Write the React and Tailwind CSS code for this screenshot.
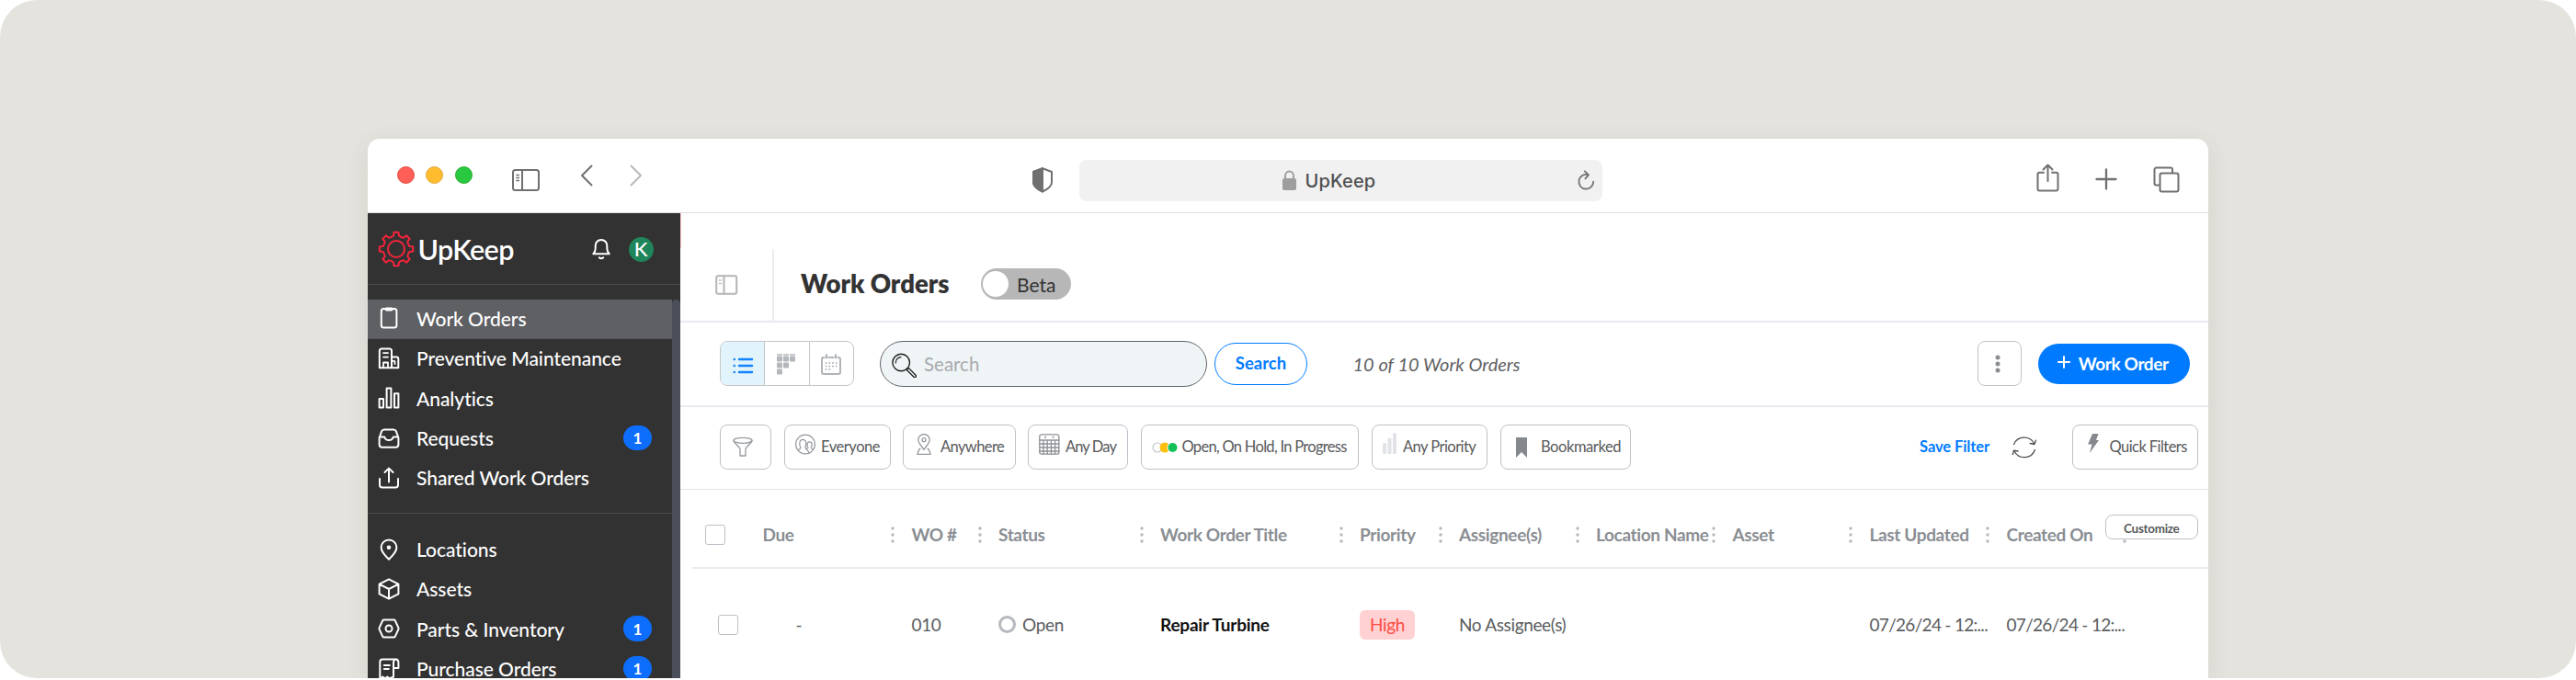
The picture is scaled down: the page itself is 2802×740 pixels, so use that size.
import React from 'react';

const GEAR = (() => {
  const pts = [];
  const p = (r, a) => `${(20 + r * Math.sin(a)).toFixed(2)} ${(20 - r * Math.cos(a)).toFixed(2)}`;
  for (let k = 0; k < 8; k++) {
    const a = (k * Math.PI) / 4;
    pts.push(`${k ? 'L' : 'M'}${p(14.8, a - 0.2)}`, `L${p(18.4, a - 0.14)}`, `L${p(18.4, a + 0.14)}`, `L${p(14.8, a + 0.2)}`);
    pts.push(`Q${p(13.6, a + Math.PI / 8)} ${p(14.8, a + Math.PI / 4 - 0.2)}`);
  }
  return pts.join(' ') + 'Z';
})();

const Svg = ({ w, h = w, vb, sw = 2, className = '', children }) => (
  <svg width={w} height={h} viewBox={vb || `0 0 ${w} ${h}`} fill="none" stroke="currentColor" strokeWidth={sw} strokeLinecap="round" strokeLinejoin="round" className={`shrink-0 ${className}`}>
    {children}
  </svg>
);

const navIcons = {
  clipboard: (<><rect x="3.8" y="2" width="16.6" height="20.5" rx="2.5" /><path d="M9.5 2.6h5.2" strokeWidth="4" /></>),
  building: (<><path d="M1.8 22.2V3.8a2.2 2.2 0 0 1 2.2-2.2h8.8A2.2 2.2 0 0 1 15 3.8v18.4M15 10.5h5.3a2 2 0 0 1 2 2v9.7H1.8" /><path d="M6 6.2h5M6 10.6h5M15 14.8h3M6 22v-5.500h5V22M18.500 15.500v2.500" strokeWidth="1.8" /></>),
  chart: (<><rect x="1.6" y="13" width="4.4" height="9.4" /><rect x="9.6" y="1.6" width="4.8" height="20.8" /><rect x="18" y="7.300" width="4.4" height="15.100" /></>),
  inbox: (<path d="M1.600 11.500 4 4.600A3.200 3.200 0 0 1 7 2.500h10a3.200 3.200 0 0 1 3 2.100l2.400 6.900v7.200a3 3 0 0 1-3 3H4.600a3 3 0 0 1-3-3zM1.800 10.500h5.400c.8 2.500 2.500 3.600 4.800 3.600s4-1.100 4.800-3.600h5.400" />),
  upload: (<path d="M2 13v6.800A2.700 2.700 0 0 0 4.700 22.500h14.600a2.700 2.700 0 0 0 2.700-2.700V13M12 16.500V2M7.500 6 12 1.600 16.500 6" />),
  pin: (<><path d="M12 22.700C7 18 3.600 14.300 3.600 9.800a8.400 8.400 0 0 1 16.800 0c0 4.500-3.400 8.200-8.400 12.900z" /><circle cx="12" cy="9.800" r="1.300" /></>),
  box: (<path d="M12 1.300 22.400 6.600v10.800L12 22.700 1.600 17.400V6.600zM1.900 6.900 12 12l10.100-5.100M12 12v10.500" />),
  nut: (<><path d="M6.600 2.400h10.800a1.500 1.500 0 0 1 1.300.8l3.700 8a1.700 1.700 0 0 1 0 1.600l-3.700 8a1.500 1.500 0 0 1-1.300.8H6.600a1.500 1.500 0 0 1-1.300-.8l-3.700-8a1.700 1.700 0 0 1 0-1.600l3.700-8a1.500 1.500 0 0 1 1.300-.8z" /><circle cx="12" cy="12" r="3.500" /></>),
  receipt: (<><path d="M17 12V5.200c0-2 1-3.700 2.800-3.700s2.600 1.500 2.600 3.500V11H17M19.500 1.500H5A2.700 2.700 0 0 0 2.300 4.200V22.500l3-2 2.500 2 2.500-2 2.500 2 4.200-2V11" /><path d="M6.800 8h6M6.800 12h5" /></>),
};

const navTop = [
  ['clipboard', 'Work Orders'],
  ['building', 'Preventive Maintenance'],
  ['chart', 'Analytics'],
  ['inbox', 'Requests', 1],
  ['upload', 'Shared Work Orders'],
];
const navBottom = [
  ['pin', 'Locations'],
  ['box', 'Assets'],
  ['nut', 'Parts & Inventory', 1],
  ['receipt', 'Purchase Orders', 1],
];

const NavItem = ({ icon, label, badge, active }) => (
  <div className={`flex h-[43.3px] shrink-0 items-center pr-[22px] pb-px pl-[11px] ${active ? 'border-b border-[#56575b] bg-[#5f6064]' : ''}`}>
    <Svg w={24}>{navIcons[icon]}</Svg>
    <span className="ml-[18px] text-[21px] leading-none font-medium tracking-[-0.05px] whitespace-nowrap">{label}</span>
    {badge && <span className="ml-auto flex h-[27.500px] w-[31px] items-center justify-center rounded-full bg-[#0d6efd] text-[17px] leading-none font-bold">{badge}</span>}
  </div>
);

const Sidebar = () => (
  <aside className="flex w-[340px] shrink-0 flex-col overflow-hidden bg-[#323232] text-white">
    <div className="flex h-[78px] shrink-0 items-center border-b border-[#4d4d4d] pt-[2px] pl-[10.500px]">
      <Svg w={40} sw={2} className="text-[#f5243b]"><path d={GEAR} /><circle cx="20" cy="20" r="9" /></Svg>
      <span className="ml-[4px] w-[106px] text-[30.500px] leading-none font-semibold tracking-[-0.6px]">UpKeep</span>
      <Svg w={20} h={24} className="ml-[83px]">
        <path d="M1.300 17.300c1.700-1.600 2.400-3.300 2.400-6V8.200a6.300 6.300 0 0 1 12.600 0v3.100c0 2.700.7 4.400 2.400 6z" />
        <path d="M7.800 21.300c1.200 1.300 3.200 1.300 4.400 0" />
      </Svg>
      <span className="ml-[20px] flex h-[27px] w-[27px] items-center justify-center rounded-full bg-[#1f855b] text-[22px] leading-none font-medium">K</span>
    </div>
    <div className="flex min-h-0 flex-1 pt-4">
      <nav className="flex min-w-0 flex-1 flex-col">
        {navTop.map(([i, l, b], n) => <NavItem key={l} icon={i} label={l} badge={b} active={n === 0} />)}
        <div className="mt-[16.500px] mb-[17px] h-px shrink-0 bg-[#4d4d4d]" />
        {navBottom.map(([i, l, b]) => <NavItem key={l} icon={i} label={l} badge={b} />)}
      </nav>
      <div className="w-[9px] shrink-0 rounded-t-full bg-[#4b4f59]" />
    </div>
  </aside>
);

const TitleBar = () => (
  <header className="flex h-[81px] shrink-0 items-center rounded-t-[13px] border-b border-[#dedede] bg-white text-[#707070]">
    <div className="ml-[31.500px] flex gap-[12.500px]">
      <span className="h-[19px] w-[19px] rounded-full border border-[#e24b41] bg-[#ff5f57]" />
      <span className="h-[19px] w-[19px] rounded-full border border-[#e1a73e] bg-[#febc2e]" />
      <span className="h-[19px] w-[19px] rounded-full border border-[#2dac2f] bg-[#28c840]" />
    </div>
    <Svg w={30} h={24} className="mt-[10px] ml-[43px]">
      <rect x="1" y="1" width="28" height="22" rx="2.500" />
      <path d="M11 1v22" />
      <path d="M4.800 6.500h2.700M4.800 9.500h2.700M4.800 12.500h2.700" strokeWidth="1.300" />
    </Svg>
    <Svg w={14} h={24} className="ml-[44.500px]"><path d="M12.500 1.500 2 12l10.500 10.500" /></Svg>
    <Svg w={14} h={24} className="ml-[40px] text-[#b9b9b9]"><path d="M1.500 1.500 12 12 1.500 22.500" /></Svg>
    <Svg w={24} h={28} className="mt-[11px] ml-[423px]">
      <path d="M12 1.300 22 5v11.500c0 4-4.500 7.500-10 10-5.500-2.500-10-6-10-10V5z" />
      <path d="M12 1.300 2 5v11.500c0 4 4.500 7.500 10 10z" fill="currentColor" />
    </Svg>
    <div className="mt-[11px] ml-[27.500px] flex h-[45px] w-[569px] items-center rounded-[8px] bg-[#f1f1f1]">
      <Svg w={15} h={22} className="ml-[221.500px] text-[#9e9e9e]">
        <rect x="1" y="10" width="13" height="11" rx="1" fill="currentColor" />
        <path d="M3 10V6.500a4.500 5 0 0 1 9 0V10" />
      </Svg>
      <span className="mt-[2px] ml-[9.500px] font-[Inter] text-[20px] leading-none font-medium tracking-[0.15px] text-[#4f4f4f]">UpKeep</span>
      <Svg w={19} h={23} sw={1.700} className="ml-auto mr-[8px] text-[#6f6f6f]">
        <path d="M17.200 12.500A7.900 7.900 0 1 1 11.500 5.200M7.800 1.300l4.200 4-3.700 4" />
      </Svg>
    </div>
    <Svg w={25} h={31} className="mt-[6px] ml-[472.500px]">
      <path d="M8 9.800H3.500A2 2 0 0 0 1.500 11.800v15.700a2 2 0 0 0 2 2h18a2 2 0 0 0 2-2V11.800a2 2 0 0 0-2-2H17M12.500 19V1.500M7.500 6.500l5-5 5 5" />
    </Svg>
    <Svg w={24} sw={2.300} className="mt-[9px] ml-[39px]"><path d="M12 1.500v21M1.500 12h21" /></Svg>
    <Svg w={29} className="mt-[9px] ml-[38.500px]">
      <path d="M6 20.500H3.500A2 2 0 0 1 1.500 18.500V3.500a2 2 0 0 1 2-2h15.500a2 2 0 0 1 2 2V7" />
      <rect x="7.500" y="7.500" width="20" height="20" rx="2" />
    </Svg>
  </header>
);

const PageHeader = () => (
  <div className="flex h-[119px] shrink-0 items-end border-b-2 border-[#e9e9ef]">
    <div className="flex h-[78px] w-[102px] items-center border-r-2 border-[#ebebf0] pl-[37.500px]">
      <Svg w={25} h={22} className="text-[#b5b5b5]">
        <rect x="1.200" y="1.200" width="22" height="19.500" rx="2" />
        <path d="M9.500 1v20" />
        <path d="M4.500 6h.6M4.500 9.500h.6M6.500 6h.2M6.500 9.500h.2" strokeWidth="1.400" />
      </Svg>
    </div>
    <div className="flex h-[78px] items-center pb-px pl-[29px]">
      <h1 className="w-[163px] text-[27.500px] leading-none font-extrabold whitespace-nowrap text-[#333]">Work Orders</h1>
      <div className="ml-[32.500px] flex h-[34px] w-[98px] items-center rounded-full bg-[#b7b7b7] pl-[2px]">
        <span className="h-[28px] w-[28px] rounded-full bg-white" />
        <span className="mt-px ml-[9.500px] text-[21px] leading-none text-[#333]">Beta</span>
      </div>
    </div>
  </div>
);

const Toolbar = () => (
  <div className="flex h-[92px] shrink-0 items-center border-b-2 border-[#e9e9ef] pr-[20px] pl-[43px]">
    <div className="flex h-[49px] w-[145.500px] overflow-hidden rounded-[8px] border border-[#c6c6c6]">
      <div className="flex w-[48px] items-center justify-center border-r border-[#c6c6c6] bg-[#e1f3fb] text-[#1283ff]">
        <Svg w={24} h={20} sw={2.400} className="mt-[4px]">
          <path d="M8 3h14M8 10h14M8 17h14M2.700 3h.1M2.700 10h.1M2.700 17h.1" />
        </Svg>
      </div>
      <div className="flex w-[48.500px] items-center justify-center border-r border-[#c6c6c6]">
        <svg width="20" height="23" viewBox="0 0 20 23" fill="#b4b7bb" className="mt-[2px] mr-px shrink-0">
          <path d="M0 .3h6v1.400H0zM7 .3h6v1.400H7zM14 .3h6v1.400h-6z" />
          <rect x="0" y="2.500" width="6" height="6" rx="1" /><rect x="7" y="2.500" width="6" height="6" rx="1" /><rect x="14" y="2.500" width="6" height="6" rx="1" />
          <rect x="0" y="9.500" width="6" height="6" rx="1" /><rect x="7" y="9.500" width="6" height="6" rx="1" />
          <rect x="0" y="16.500" width="6" height="6" rx="1" />
        </svg>
      </div>
      <div className="flex flex-1 items-center justify-center text-[#b0b3b8]">
        <Svg w={22} h={23} className="mt-[2px] mr-px">
          <path d="M3.500 4H3a2 2 0 0 0-2 2v14a2 2 0 0 0 2 2h16a2 2 0 0 0 2-2V6a2 2 0 0 0-2-2h-.5M8.500 4h5" />
          <path d="M6 1.500v2.800M16 1.500v2.800" strokeWidth="2.400" />
          <path d="M5.500 10h12M5.500 13.500h12M5.500 17h6" strokeWidth="1.800" strokeDasharray="0.100 3.600" />
        </Svg>
      </div>
    </div>
    <div className="ml-[28px] flex h-[50px] w-[356.500px] items-center rounded-full border border-[#626568] bg-[#eff4f6]">
      <Svg w={27} sw={1.400} className="mt-[3px] ml-[12px] text-[#1d1d1d]">
        <circle cx="10.200" cy="10.500" r="9.300" />
        <path d="M4.300 11A6 6 0 0 1 10 4.600" strokeWidth="1.200" />
        <path d="M16.300 18.500 18.600 16.600 26 24.300a1.300 1.300 0 0 1-2 2z" strokeWidth="1.300" />
      </Svg>
      <span className="mt-px ml-[8.500px] text-[20.500px] leading-none text-[#a8abad]">Search</span>
    </div>
    <button className="ml-[8px] flex h-[46px] w-[101px] items-center justify-center rounded-full border border-[#007bff] text-[18.500px] leading-none font-bold text-[#007bff]">Search</button>
    <span className="ml-[49.500px] text-[20px] leading-none text-[#5f6163] italic">10 of 10 Work Orders</span>
    <div className="ml-auto flex h-[49px] w-[48.500px] items-center justify-center rounded-[8px] border border-[#bfc3c8] text-[#8a8e93]">
      <svg width="6" height="20" viewBox="0 0 6 20" fill="currentColor" className="mr-[4px]"><circle cx="3" cy="3" r="2.500" /><circle cx="3" cy="10" r="2.500" /><circle cx="3" cy="17" r="2.500" /></svg>
    </div>
    <button className="ml-[17.500px] flex h-[44px] w-[165.300px] items-center rounded-full bg-[#007bff] text-white">
      <Svg w={14} className="mb-[3px] ml-[21.500px]"><path d="M7 1v12M1 7h12" /></Svg>
      <span className="ml-[8.500px] text-[19px] leading-none font-bold tracking-[-0.35px] whitespace-nowrap">Work Order</span>
    </button>
  </div>
);

const Chip = ({ className, children }) => (
  <div className={`flex h-[49px] shrink-0 items-center rounded-[8px] border border-[#bcc1c7] text-[16.500px] leading-none whitespace-nowrap text-[#58595b] ${className}`}>{children}</div>
);

const FilterBar = () => (
  <div className="flex h-[90px] shrink-0 items-center border-b border-[#e2e3e5] pr-[11px] pb-px pl-[43px] text-[#9fa3a8]">
    <Chip className="w-[56px]">
      <Svg w={22} h={22} sw={1.300} className="mb-[2px] ml-[13px] text-[#95999e]">
        <ellipse cx="11" cy="4.300" rx="10" ry="3" /><path d="M1 4.500c0 3 7 6.500 7 9.500v7h6v-7c0-3 7-6.500 7-9.500" />
      </Svg>
    </Chip>
    <Chip className="ml-[13.500px] w-[116px]">
      <Svg w={22} h={23} sw={1.200} className="mb-[7px] ml-[11px] text-[#95999e]">
        <circle cx="11" cy="11.500" r="10.400" />
        <path d="M3.300 18c1-1.300 2.600-1.200 2.600-3.200C4.200 13 4 6.300 8.200 6.300s4.400 6 2.600 8.500c0 2.400 3.200 1.800 4.200 6.200M12.500 16.500c1-.5 1.600-.7 1.400-1.800-1.500-1.700-1.300-5.800 1.700-5.800s3.200 4.100 1.700 5.800c-.2 1.500.8 1.500 1.800 2.300" />
      </Svg>
      <span className="ml-[6.500px] tracking-[-0.450px]">Everyone</span>
    </Chip>
    <Chip className="ml-[13.500px] w-[122.500px]">
      <Svg w={16} h={23} sw={1.300} className="mb-[7px] ml-[14px] text-[#95999e]">
        <path d="M8 17.500C5 12.500 1.800 10 1.800 6.700a6.200 6.200 0 0 1 12.400 0C14.200 10 11 12.500 8 17.500z" /><circle cx="8" cy="6.700" r="2" />
        <path d="M4 16.500H3L.8 22.300h14.400L13 16.500h-1" />
      </Svg>
      <span className="ml-[10px] tracking-[-0.600px]">Anywhere</span>
    </Chip>
    <Chip className="ml-[13.500px] w-[109px]">
      <Svg w={23} h={23} sw={1.300} className="mb-[7px] ml-[10.500px] text-[#8d9196]">
        <rect x=".8" y=".8" width="21" height="21.400" rx="2" /><path d="M1 7h21M1 11h21M1 15h21M1 19h21M5 7v15M9.200 7v15M13.400 7v15M17.600 7v15" /><path d="M7 3.800h.1M15.500 3.800h.1" strokeWidth="2" />
      </Svg>
      <span className="ml-[6.500px] tracking-[-0.900px]">Any Day</span>
    </Chip>
    <Chip className="ml-[14px] w-[237px]">
      <svg width="28" height="12" viewBox="0 0 28 12" className="ml-[10.500px] shrink-0">
        <circle cx="6" cy="6" r="5" fill="#fff" stroke="#c3c6c9" strokeWidth="1.200" /><circle cx="14" cy="6" r="5.500" fill="#ffbf0a" /><circle cx="22" cy="6" r="5.500" fill="#fff" /><circle cx="22.500" cy="6" r="5" fill="#13c15b" />
      </svg>
      <span className="ml-[5px] tracking-[-0.700px]">Open, On Hold, In Progress</span>
    </Chip>
    <Chip className="ml-[14px] w-[125.500px]">
      <svg width="15" height="23" viewBox="0 0 15 23" fill="#e1e3e8" className="mb-[8px] ml-[11px] shrink-0">
        <rect x="0" y="11" width="4" height="12" rx="1.500" /><rect x="5.500" y="5.500" width="4" height="17.500" rx="1.500" /><rect x="11" y="0" width="4" height="23" rx="1.500" />
      </svg>
      <span className="ml-[7px] tracking-[-0.550px]">Any Priority</span>
    </Chip>
    <Chip className="ml-[14px] w-[142.500px]">
      <svg width="12" height="22" viewBox="0 0 12 22" fill="#85898e" className="ml-[16px] shrink-0"><path d="M0 0h12v22l-6-6-6 6z" /></svg>
      <span className="ml-[15.500px] tracking-[-0.430px]">Bookmarked</span>
    </Chip>
    <span className="ml-auto text-[16.500px] leading-none font-bold tracking-[-0.100px] text-[#007bff]">Save Filter</span>
    <Svg w={28} h={26} sw={1.300} className="ml-[24px] text-[#4c4f52]">
      <path d="M2.600 9.500A12 11.500 0 0 1 24.500 8.500M25.400 15.500A12 11.500 0 0 1 3.200 17.300M26.500 5.200l-1.600 4.300-4.700-1M1.300 20.500l1.200-4.400 4.500.9" />
    </Svg>
    <Chip className="ml-[37.500px] w-[137.500px]">
      <svg width="12" height="21" viewBox="0 0 12 21" fill="#85898e" className="mb-[8px] ml-[16px] shrink-0"><path d="M5 0h6.500L9 7h3L2 21l2.500-9.500H0z" /></svg>
      <span className="ml-[12px] tracking-[-0.560px]">Quick Filters</span>
    </Chip>
  </div>
);

const Checkbox = ({ className = '' }) => <span className={`h-[22px] w-[22px] shrink-0 rounded-[3px] border-[1.500px] border-[#bcc0c6] bg-white ${className}`} />;

const Dots = () => (
  <svg width="4" height="18" viewBox="0 0 4 18" fill="#b4b8bd" className="mr-[18.500px] shrink-0"><circle cx="2" cy="2" r="1.700" /><circle cx="2" cy="9" r="1.700" /><circle cx="2" cy="16" r="1.700" /></svg>
);

const columns = ['Due', 'WO #', 'Status', 'Work Order Title', 'Priority', 'Assignee(s)', 'Location Name', 'Asset', 'Last Updated', 'Created On'];
const grid = 'grid grid-cols-[162px_94.500px_176px_217px_108px_149px_148.500px_149px_149px_149px] items-center';

const Table = () => (
  <div className="relative flex flex-col">
    <div className="ml-[13px] flex h-[86px] shrink-0 items-center border-b-2 border-[#e9e9ef] pt-[14px] pl-[14px]">
      <Checkbox className="mr-[40.500px]" />
      <div className={`${grid} text-[19px] leading-none font-bold tracking-[-0.35px] whitespace-nowrap text-[#8a8e93]`}>
        {columns.map((c) => <div key={c} className="flex items-center justify-between"><span>{c}</span><Dots /></div>)}
      </div>
    </div>
    <div className="flex h-[122px] shrink-0 items-center pl-[40.500px]">
      <Checkbox className="mr-[27px]" />
      <div className={`${grid} text-[19px] leading-none tracking-[-0.35px] whitespace-nowrap text-[#5b5d60]`}>
        <span className="pl-[36px]">-</span>
        <span>010</span>
        <span className="flex items-center"><i className="mr-[7px] h-[19px] w-[19px] rounded-full border-[3px] border-[#b6babf]" />Open</span>
        <span className="font-bold tracking-[-0.200px] text-[#111]">Repair Turbine</span>
        <span className="flex h-[32px] w-[60px] items-center justify-center rounded-[6px] bg-[#ffd1d2] text-[#ff4b41]">High</span>
        <span>No Assignee(s)</span>
        <span />
        <span />
        <span className="tracking-[-0.700px]">07/26/24 - 12:...</span>
        <span className="tracking-[-0.700px]">07/26/24 - 12:...</span>
      </div>
    </div>
    <button className="absolute top-[27px] right-[11px] flex h-[27px] w-[101.500px] items-center justify-center rounded-[8px] border-[1.500px] border-[#bcc1c7] bg-white pt-[6px] text-[13.500px] leading-none font-bold tracking-[-0.300px] text-[#58595b]">Customize</button>
  </div>
);

export default function App() {
  return (
    <div className="h-[740px] w-[2802px] overflow-hidden bg-white font-[Lato,sans-serif]">
      <div className="flex h-[738px] justify-center overflow-hidden rounded-[40px] bg-[#e4e3de] pt-[150.500px]">
        <div className="flex w-[2002px] flex-col rounded-t-[13px] shadow-[0_6px_26px_rgba(70,70,40,0.10)]">
          <TitleBar />
          <div className="flex min-h-0 flex-1 overflow-hidden">
            <Sidebar />
            <main className="flex min-w-0 flex-1 flex-col overflow-hidden bg-white">
              <div className="relative">
                <span className="absolute top-0 left-0 h-[38px] w-px bg-[#ffcdd2]" />
                <PageHeader />
              </div>
              <Toolbar />
              <FilterBar />
              <Table />
            </main>
          </div>
        </div>
      </div>
    </div>
  );
}
